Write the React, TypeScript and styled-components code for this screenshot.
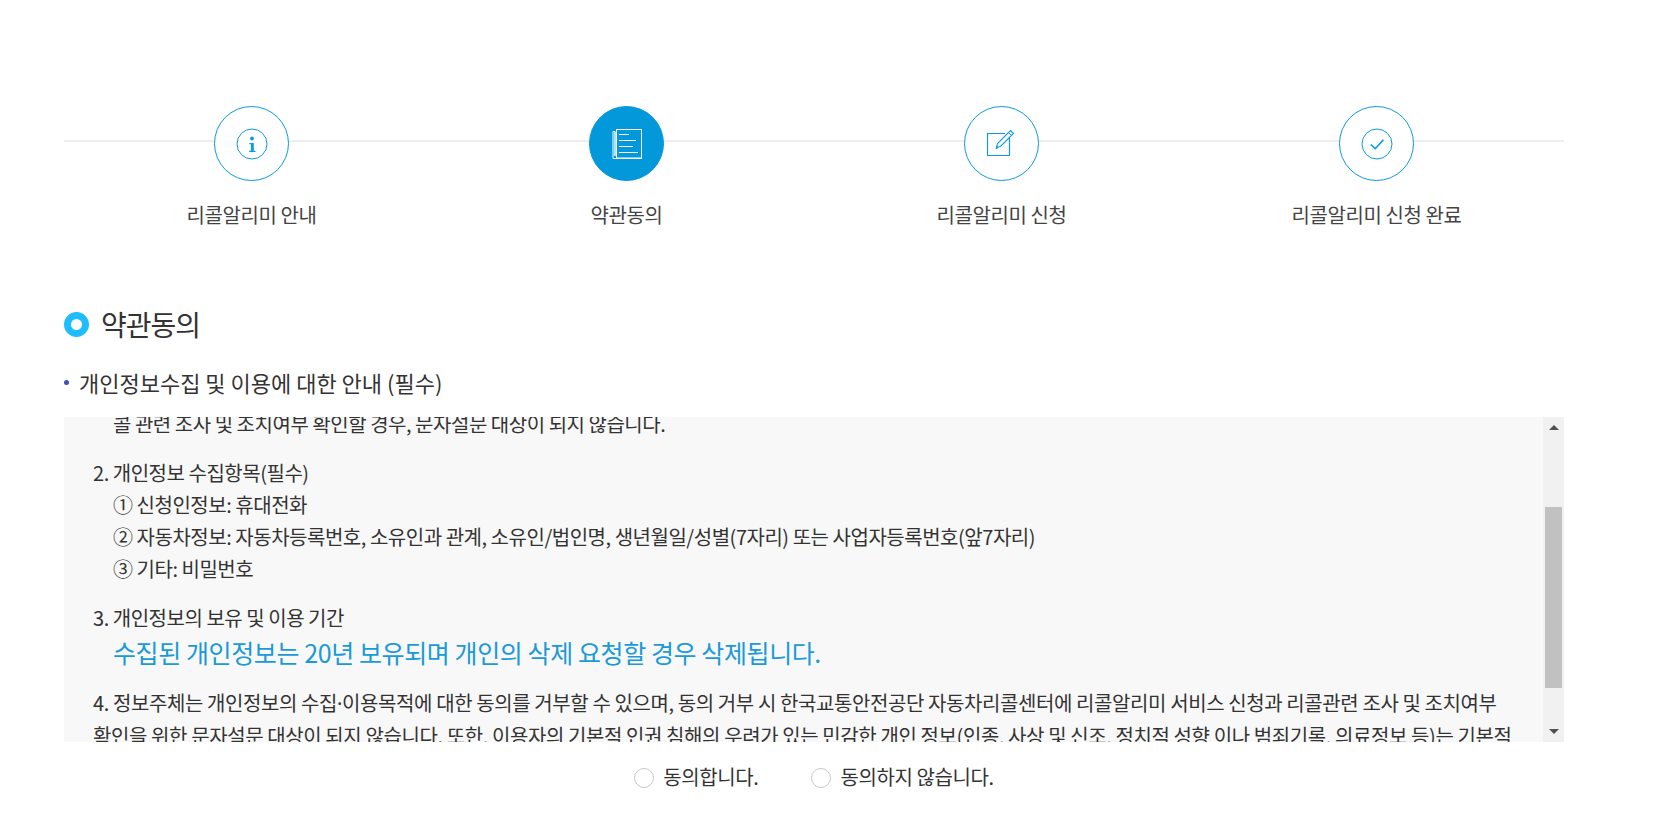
import React, { useLayoutEffect, useRef } from "react";
import styled, { createGlobalStyle } from "styled-components";

const Global = createGlobalStyle`
  html, body { margin: 0; padding: 0; background: #fff; }
  body { font-family: "Noto Sans CJK KR", "Noto Sans", sans-serif; color: #333; overflow: hidden; }
`;

const Page = styled.div`
  width: 1500px;
  margin-left: 64px;
  padding-top: 106px;
`;

const Steps = styled.ol`
  position: relative;
  display: grid;
  grid-template-columns: repeat(4, 1fr);
  list-style: none;
  margin: 0;
  padding: 0;
  &::before {
    content: "";
    position: absolute;
    left: 0;
    right: 0;
    top: 34px;
    height: 2px;
    background: #eeeeee;
  }
`;

const Step = styled.li`
  position: relative;
  display: flex;
  flex-direction: column;
  align-items: center;
`;

const StepCircle = styled.span<{ $active?: boolean }>`
  width: 75px;
  height: 75px;
  box-sizing: border-box;
  border-radius: 50%;
  display: flex;
  align-items: center;
  justify-content: center;
  border: 1px solid ${(p) => (p.$active ? "#0398da" : "#0a9be0")};
  background: ${(p) => (p.$active ? "#0398da" : "#fff")};
`;

const StepLabel = styled.span`
  margin-top: 20px;
  font-size: 20px;
  line-height: 28px;
  color: #444;
  letter-spacing: -0.4px;
`;

const Title = styled.h2`
  display: flex;
  align-items: center;
  gap: 12px;
  margin: 77px 0 0;
  font-size: 28px;
  line-height: 36px;
  font-weight: 400;
  color: #333;
  letter-spacing: -1px;
`;

const Ring = styled.span`
  width: 25px;
  height: 25px;
  box-sizing: border-box;
  border-radius: 50%;
  border: 7px solid #1fbcff;
`;

const SubTitle = styled.h3`
  display: flex;
  align-items: center;
  gap: 10px;
  margin: 25px 0 0;
  font-size: 22px;
  line-height: 30px;
  font-weight: 400;
  color: #333;
  &::before {
    content: "";
    width: 5px;
    height: 5px;
    border-radius: 50%;
    background: #3f51b5;
  }
`;

const TermsFrame = styled.div`
  display: flex;
  margin-top: 20px;
  height: 325px;
  background: #f8f8f8;
`;

const TermsBody = styled.div`
  flex: 1;
  min-width: 0;
  overflow: hidden;
  padding: 18px 10px 0 29px;
  font-size: 20px;
  line-height: 32px;
  color: #333;
  letter-spacing: -0.47px;
`;

const ScrollBar = styled.div`
  width: 21px;
  flex: none;
  display: flex;
  flex-direction: column;
  background: #f1f1f1;
`;

const ScrollButton = styled.span<{ $down?: boolean }>`
  height: 21px;
  flex: none;
  display: flex;
  align-items: center;
  justify-content: center;
  &::before {
    content: "";
    border-left: 5px solid transparent;
    border-right: 5px solid transparent;
    border-bottom: ${(p) => (p.$down ? "0" : "5px solid #505050")};
    border-top: ${(p) => (p.$down ? "5px solid #505050" : "0")};
  }
`;

const ScrollRail = styled.div`
  flex: 1;
  padding: 69px 2px 0;
`;

const ScrollThumb = styled.div`
  height: 181px;
  background: #c1c1c1;
`;

const Section = styled.div`
  margin-bottom: 17px;
`;

const Line = styled.p`
  margin: 0;
`;

const LongLine = styled.p`
  margin: 0;
  letter-spacing: -0.4px;
`;

const SubLine = styled.p`
  margin: 0 0 0 20px;
`;

const Notice = styled.p`
  margin: 0 0 0 20px;
  font-size: 25px;
  line-height: 36px;
  color: #1a9ad6;
  letter-spacing: -0.4px;
`;

const MiddleDot = styled.span`
  font-family: "Noto Sans", sans-serif;
`;

const Agreement = styled.div`
  display: flex;
  justify-content: center;
  gap: 53px;
  margin-top: 20px;
`;

const Choice = styled.label`
  display: flex;
  align-items: center;
  gap: 9px;
  font-size: 20px;
  line-height: 30px;
  color: #333;
  letter-spacing: -0.4px;
`;

const Radio = styled.input`
  appearance: none;
  width: 20px;
  height: 20px;
  margin: 2px 0 0;
  border: 1px solid #c8c8c8;
  border-radius: 50%;
  background: #fff;
`;

const InfoIcon = () => (
  <svg width="32" height="32" viewBox="0 0 32 32" fill="none">
    <circle cx="16" cy="16" r="15" stroke="#0a9be0" />
    <circle cx="16" cy="10.5" r="1.9" fill="#0a9be0" />
    <path d="M13.4 15h4.400v7.800h1.700v1.200h-6.400v-1.200h1.800v-6.600h-1.500z" fill="#0a9be0" />
  </svg>
);

const DocIcon = () => (
  <svg width="30" height="30" viewBox="0 0 30 30" fill="none" stroke="#fff">
    <path d="M3 2.500H1V29.500H29.500V27" strokeWidth="1" />
    <path d="M3 2.500V27" strokeWidth="1.400" />
    <rect x="4.500" y="0.500" width="25" height="28.500" strokeWidth="1" />
    <path d="M7 5.500h10M7 11.500h17M7 17.500h14M7 23.500h19" strokeWidth="1" />
  </svg>
);

const EditIcon = () => (
  <svg width="30" height="30" viewBox="1 1 30 30" fill="none" stroke="#0a9be0">
    <path d="M19 5.500H1.500V27.500H23.500V10" strokeWidth="1.200" />
    <path d="M10.500 19.500l1-4L24.500 2.500l3 3L14.500 18.500z" strokeWidth="1.100" />
    <path d="M22.500 4.500l3 3" strokeWidth="1" />
    <path d="M10 20.500l2-.8-1.200-1.200z" fill="#0a9be0" />
  </svg>
);

const CheckIcon = () => (
  <svg width="32" height="32" viewBox="0 0 32 32" fill="none" stroke="#0a9be0">
    <circle cx="16" cy="16" r="15" />
    <path d="M9.800 16.500l4.400 4.200 8.200-8.800" strokeWidth="1.600" />
  </svg>
);

const steps = [
  { label: "리콜알리미 안내", icon: <InfoIcon /> },
  { label: "약관동의", icon: <DocIcon />, active: true },
  { label: "리콜알리미 신청", icon: <EditIcon /> },
  { label: "리콜알리미 신청 완료", icon: <CheckIcon /> },
];

export default function App() {
  const body = useRef<HTMLDivElement>(null);
  useLayoutEffect(() => {
    if (body.current) body.current.scrollTop = 124;
  }, []);

  return (
    <Page>
      <Global />
      <Steps>
        {steps.map((s) => (
          <Step key={s.label}>
            <StepCircle $active={s.active}>{s.icon}</StepCircle>
            <StepLabel>{s.label}</StepLabel>
          </Step>
        ))}
      </Steps>

      <Title>
        <Ring />
        약관동의
      </Title>
      <SubTitle>개인정보수집 및 이용에 대한 안내 (필수)</SubTitle>

      <TermsFrame>
        <TermsBody ref={body}>
          <Section>
            <Line>1. 개인정보의 수집<MiddleDot>·</MiddleDot>이용 목적</Line>
            <SubLine>자동차 리콜 관련 정보를 문자로 안내해 드리는 리콜알리미 서비스 제공</SubLine>
            <SubLine>수집한 개인정보는 리콜 안내 외의 목적으로 이용되지 않으며, 리콜알리미 서비스 신청과 리</SubLine>
            <SubLine>콜 관련 조사 및 조치여부 확인할 경우, 문자설문 대상이 되지 않습니다.</SubLine>
          </Section>
          <Section>
            <Line>2. 개인정보 수집항목(필수)</Line>
            <SubLine>① 신청인정보: 휴대전화</SubLine>
            <SubLine>② 자동차정보: 자동차등록번호, 소유인과 관계, 소유인/법인명, 생년월일/성별(7자리) 또는 사업자등록번호(앞7자리)</SubLine>
            <SubLine>③ 기타: 비밀번호</SubLine>
          </Section>
          <Section>
            <Line>3. 개인정보의 보유 및 이용 기간</Line>
            <Notice>수집된 개인정보는 20년 보유되며 개인의 삭제 요청할 경우 삭제됩니다.</Notice>
          </Section>
          <Section>
            <LongLine>
              4. 정보주체는 개인정보의 수집<MiddleDot>·</MiddleDot>이용목적에 대한 동의를 거부할 수 있으며, 동의 거부 시 한국교통안전공단 자동차리콜센터에 리콜알리미 서비스 신청과 리콜관련 조사 및 조치여부
              <br />
              확인을 위한 문자설문 대상이 되지 않습니다. 또한, 이용자의 기본적 인권 침해의 우려가 있는 민감한 개인 정보(인종, 사상 및 신조, 정치적 성향 이나 범죄기록, 의료정보 등)는 기본적
              <br />
              으로 수집하지 않습니다.
            </LongLine>
          </Section>
        </TermsBody>
        <ScrollBar>
          <ScrollButton />
          <ScrollRail>
            <ScrollThumb />
          </ScrollRail>
          <ScrollButton $down />
        </ScrollBar>
      </TermsFrame>

      <Agreement>
        <Choice>
          <Radio type="radio" name="agree" />
          동의합니다.
        </Choice>
        <Choice>
          <Radio type="radio" name="agree" />
          동의하지 않습니다.
        </Choice>
      </Agreement>
    </Page>
  );
}
